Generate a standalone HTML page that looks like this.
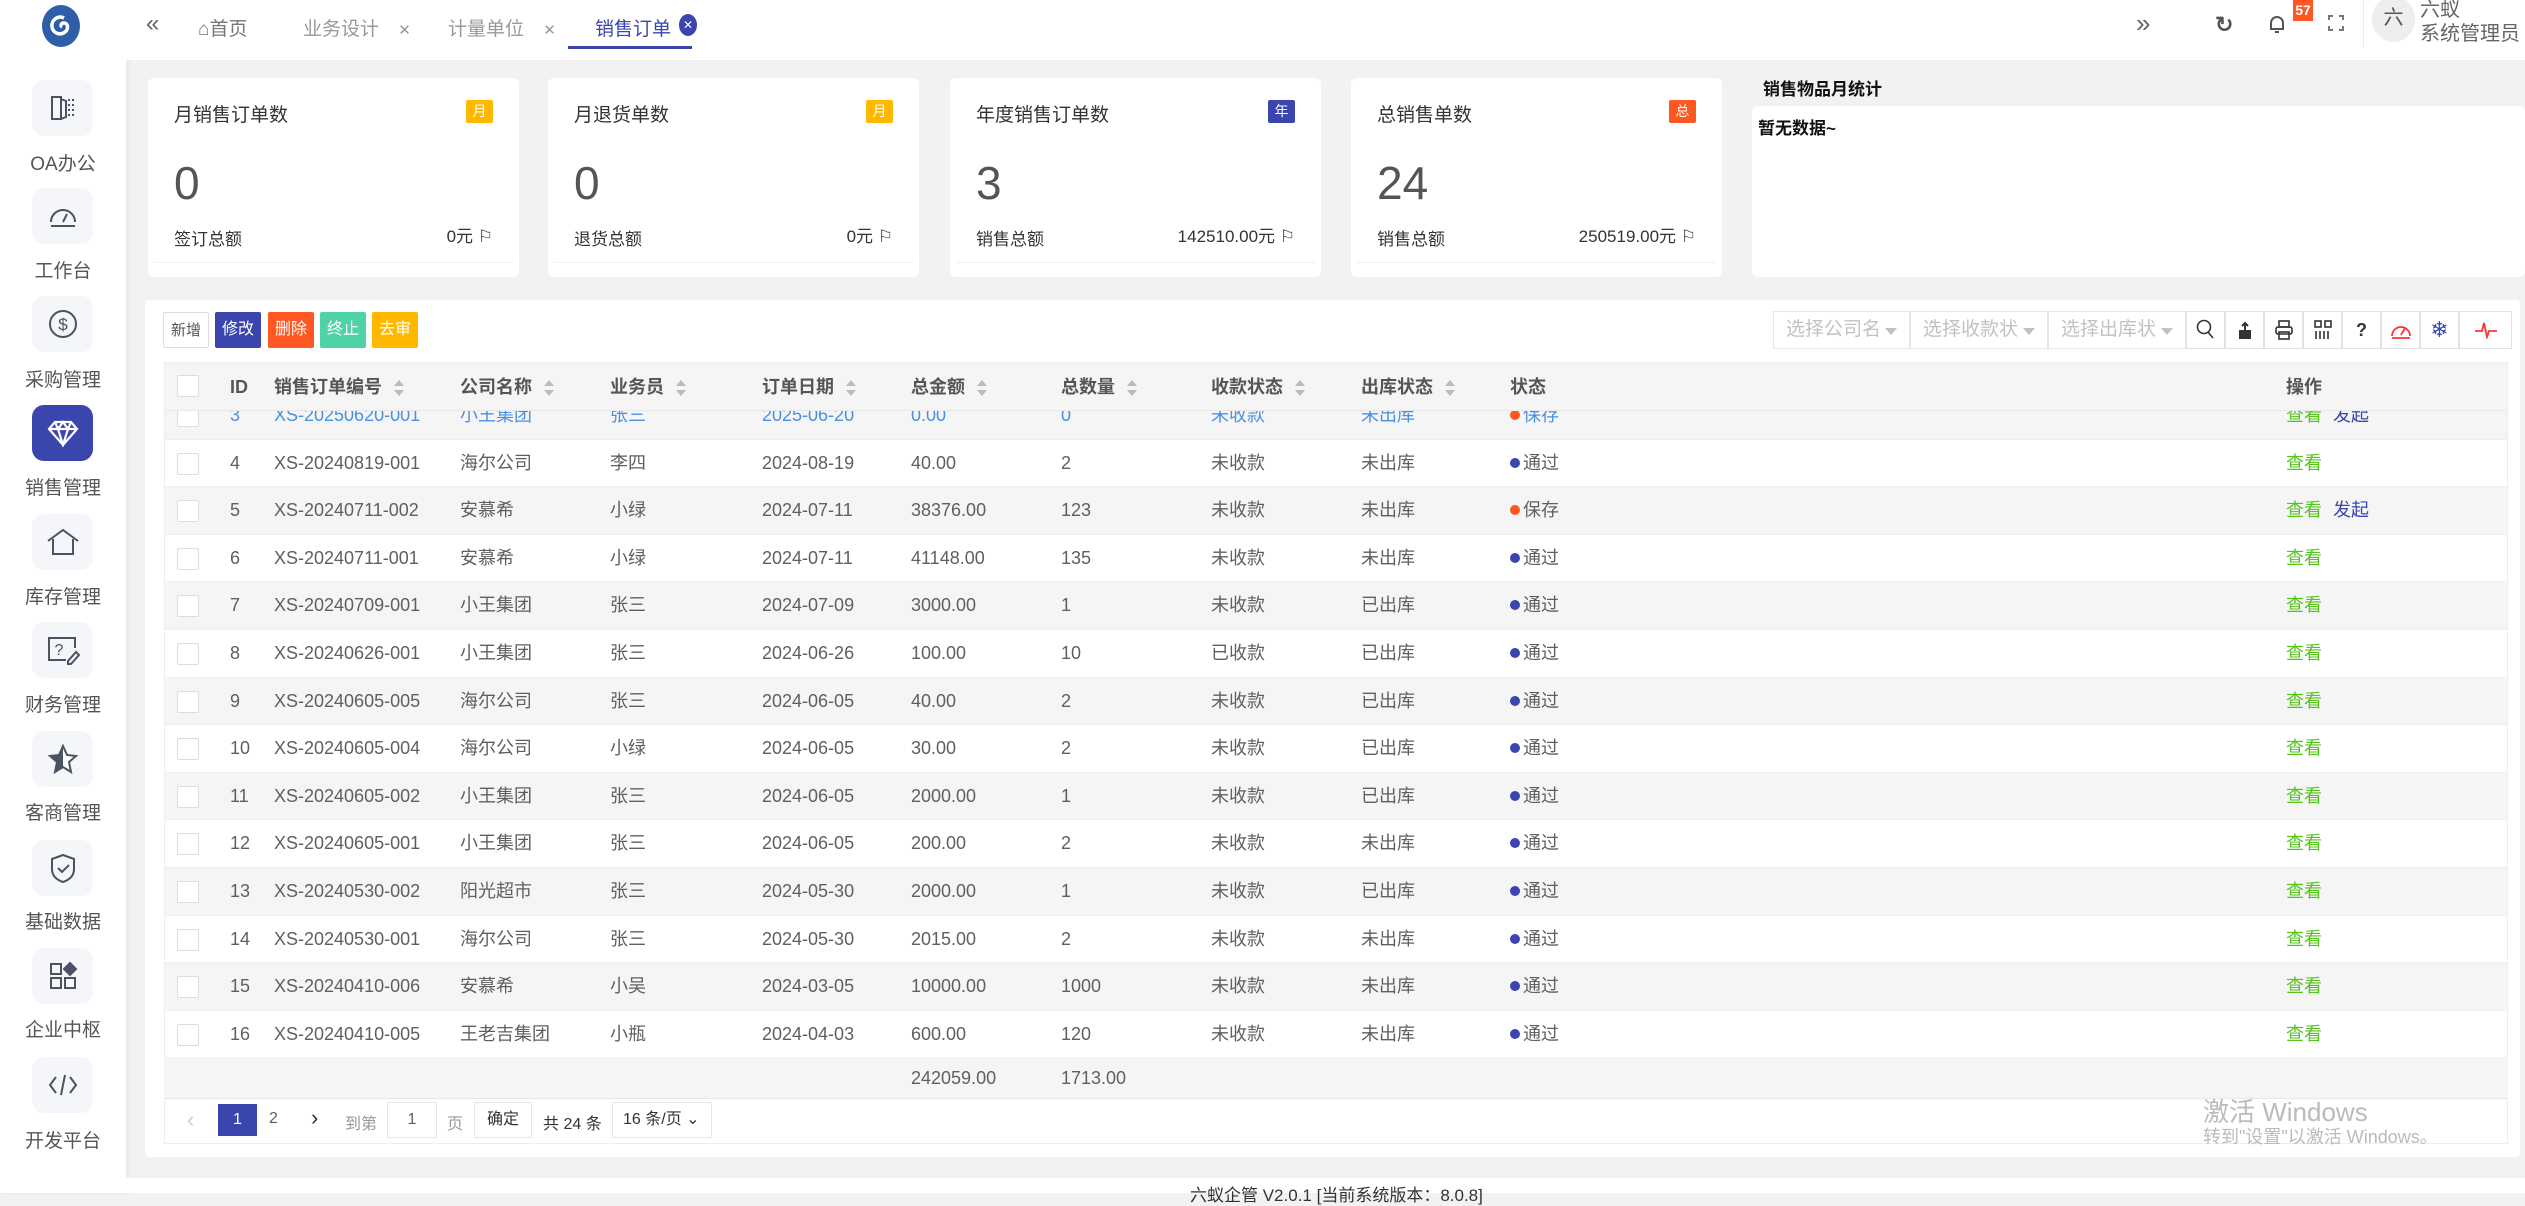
<!DOCTYPE html>
<html><head><meta charset="utf-8"><style>
*{margin:0;padding:0;box-sizing:border-box}
body{width:2525px;height:1193px;overflow:hidden;background:#f2f2f2;font-family:"Liberation Sans","Noto Sans CJK SC",sans-serif;color:#5f5f5f;position:relative}
.abs{position:absolute}
#side{left:0;top:0;width:126px;height:1193px;background:#fff;box-shadow:2px 0 6px rgba(0,0,0,.05)}
.sb{position:absolute;left:32px;width:61px;height:56px;border-radius:12px;background:#f4f6fa;display:flex;align-items:center;justify-content:center}
.sb.act{background:#3a46ad}
.sl{position:absolute;left:0;width:126px;text-align:center;font-size:19px;color:#555}
#top{left:126px;top:0;width:2399px;height:60px;background:#fff}
.tab{position:absolute;top:14px;font-size:19px;color:#999}
.card{position:absolute;top:78px;width:371px;height:199px;background:#fff;border-radius:6px}
.card .t{position:absolute;left:26px;top:22px;font-size:19px;color:#333}
.card .b{position:absolute;right:26px;top:22px;width:27px;height:23px;color:#fff;font-size:14px;text-align:center;line-height:23px;border-radius:2px}
.card .n{position:absolute;left:26px;top:78px;font-size:46px;color:#555}
.card .l{position:absolute;left:26px;top:147px;font-size:17px;color:#333}
.card .r{position:absolute;right:26px;top:144px;font-size:17px;color:#333}
.card .hr{position:absolute;left:6px;right:6px;bottom:14px;border-top:1px solid #f0f0f0}
#main{left:145px;top:300px;width:2375px;height:857px;background:#fff;border-radius:4px}
.btn{position:absolute;top:312px;height:36px;width:46px;font-size:16px;color:#fff;text-align:center;line-height:36px;border-radius:2px}
.row{position:absolute;left:164px;width:2344px;height:47.6px;font-size:18px;color:#5f5f5f}
.row span{position:absolute;top:0;line-height:47.6px;white-space:nowrap}
.row .cb{position:absolute;left:13px;top:13px;width:22px;height:22px;border:1px solid #ddd;background:#fff;border-radius:2px}
.hd{font-weight:bold;color:#555}
.dot{display:inline-block;width:10px;height:10px;border-radius:50%;margin-right:3px;vertical-align:1px}
.sort{display:inline-block;margin-left:12px;vertical-align:middle;width:10px;height:16px;position:relative}
.sort:before{content:"";position:absolute;top:0;left:0;border:5px solid transparent;border-bottom:6px solid #bbb;border-top:0}
.sort:after{content:"";position:absolute;bottom:0;left:0;border:5px solid transparent;border-top:6px solid #bbb;border-bottom:0}
.ic{position:absolute;top:311px;width:39px;height:38px;border:1px solid #e2e2e2;background:#fff;display:flex;align-items:center;justify-content:center;font-size:18px}
.sel{position:absolute;top:311px;height:38px;border:1px solid #e6e6e6;font-size:19px;color:#c2c2c2;line-height:36px;padding-left:12px}
.sel:after{content:"";position:absolute;right:12px;top:16px;border:6px solid transparent;border-top:7px solid #c2c2c2}
</style></head><body>

<div id="side" class="abs">
  <svg class="abs" style="left:37px;top:4px" width="50" height="44" viewBox="0 0 50 44"><ellipse cx="24" cy="22" rx="19" ry="21" fill="#2f5ea8"/><path d="M27 14c-6-3-13 2-12 9 1 6 8 9 13 5 4-3 3-9-1-9-3 0-4 3-2 4" stroke="#fff" stroke-width="3.5" fill="none"/></svg>
  <div class="sb" style="top:80px"><svg width="30" height="30" viewBox="0 0 30 30" fill="none" stroke="#4a5263" stroke-width="2"><path d="M4 4h9v22H4zM13 6l5 2v16l-5 2"/><path d="M21 6v2M21 11v2M21 16v2M21 21v2M25 6v2M25 11v2M25 16v2M25 21v2"/></svg></div>
  <div class="sl" style="top:149px">OA办公</div>
  <div class="sb" style="top:188px"><svg width="32" height="32" viewBox="0 0 32 32" fill="none" stroke="#4a5263" stroke-width="2"><path d="M4 22a12 12 0 1 1 24 0"/><path d="M4 26h24M16 22l4-8"/></svg></div>
  <div class="sl" style="top:256px">工作台</div>
  <div class="sb" style="top:296px"><svg width="32" height="32" viewBox="0 0 32 32" fill="none" stroke="#4a5263" stroke-width="2"><circle cx="16" cy="16" r="13"/><text x="16" y="22" font-size="17" text-anchor="middle" fill="#4a5263" stroke="none" font-family="Liberation Sans">$</text></svg></div>
  <div class="sl" style="top:365px">采购管理</div>
  <div class="sb act" style="top:405px"><svg width="32" height="28" viewBox="0 0 32 28" fill="none" stroke="#fff" stroke-width="2.2"><path d="M8 3h16l6 7-14 16L2 10zM2 10h28M11 10l5 16 5-16M8 3l3 7 5-7 5 7 3-7"/></svg></div>
  <div class="sl" style="top:473px">销售管理</div>
  <div class="sb" style="top:514px"><svg width="34" height="30" viewBox="0 0 34 30" fill="none" stroke="#4a5263" stroke-width="2"><path d="M2 14L17 3l15 11M7 12v15h20V12"/></svg></div>
  <div class="sl" style="top:582px">库存管理</div>
  <div class="sb" style="top:622px"><svg width="34" height="32" viewBox="0 0 34 32" fill="none" stroke="#4a5263" stroke-width="2"><path d="M20 26H3V4h26v10"/><text x="13" y="21" font-size="16" fill="#4a5263" stroke="none" text-anchor="middle" font-family="Liberation Sans">?</text><path d="M22 27l8-9 3 3-8 9h-3z"/></svg></div>
  <div class="sl" style="top:690px">财务管理</div>
  <div class="sb" style="top:731px"><svg width="32" height="32" viewBox="0 0 32 32"><path d="M16 3l4 9 9 1-7 6 2 10-8-5-8 5 2-10-7-6 9-1z" fill="#fff" stroke="#4a5263" stroke-width="2"/><path d="M16 3l-4 9-9 1 7 6-2 10 8-5z" fill="#4a5263"/></svg></div>
  <div class="sl" style="top:798px">客商管理</div>
  <div class="sb" style="top:840px"><svg width="30" height="32" viewBox="0 0 30 32" fill="none" stroke="#4a5263" stroke-width="2"><path d="M15 3l11 4v10c0 7-5 11-11 13C9 28 4 24 4 17V7z"/><path d="M10 16l4 4 7-7"/></svg></div>
  <div class="sl" style="top:907px">基础数据</div>
  <div class="sb" style="top:948px"><svg width="30" height="30" viewBox="0 0 30 30" fill="none" stroke="#4a5263" stroke-width="2"><rect x="3" y="3" width="10" height="10"/><rect x="3" y="17" width="10" height="10"/><rect x="17" y="17" width="10" height="10"/><path d="M22 2l6 6-6 6-6-6z" fill="#4a5263"/></svg></div>
  <div class="sl" style="top:1015px">企业中枢</div>
  <div class="sb" style="top:1057px"><svg width="30" height="26" viewBox="0 0 30 26" fill="none" stroke="#4a5263" stroke-width="2"><path d="M8 5L2 13l6 8M22 5l6 8-6 8M17 3l-4 20"/></svg></div>
  <div class="sl" style="top:1126px">开发平台</div>
</div>

<div id="top" class="abs">
  <div class="tab" style="left:20px;color:#666;font-size:24px;top:10px">«</div>
  <div class="tab" style="left:72px;color:#777">⌂首页</div>
  <div class="tab" style="left:177px">业务设计 <span style="margin-left:14px;font-size:15px">✕</span></div>
  <div class="tab" style="left:322px">计量单位 <span style="margin-left:14px;font-size:15px">✕</span></div>
  <div class="tab" style="left:469px;color:#3a46ad">销售订单</div>
  <div class="abs" style="left:553px;top:14px;width:18px;height:22px;border-radius:50%;background:#3a46ad;color:#fff;font-size:12px;text-align:center;line-height:22px">✕</div>
  <div class="abs" style="left:442px;top:46px;width:124px;height:3px;background:#3a46ad"></div>
  <div class="abs" style="left:2010px;top:8px;font-size:26px;color:#666">»</div>
  <div class="abs" style="left:2089px;top:12px;font-size:22px;color:#555;font-weight:bold">↻</div>
  <svg class="abs" style="left:2142px;top:14px" width="18" height="20" viewBox="0 0 18 20" fill="none" stroke="#555" stroke-width="2"><path d="M3 15V9a6 6 0 0 1 12 0v6H2h14M7 18h4"/></svg>
  <div class="abs" style="left:2167px;top:0;width:20px;height:21px;background:#ff5722;color:#fff;font-size:14px;font-weight:bold;text-align:center;line-height:21px">57</div>
  <svg class="abs" style="left:2202px;top:15px" width="16" height="16" viewBox="0 0 16 16" fill="none" stroke="#777" stroke-width="2"><path d="M1 5V1h4M11 1h4v4M15 11v4h-4M5 15H1v-4"/></svg>
  <div class="abs" style="left:2237px;top:0;width:1px;height:48px;background:#eee"></div>
  <div class="abs" style="left:2246px;top:-4px;width:43px;height:46px;border-radius:50%;background:#eee;color:#555;font-size:20px;text-align:center;line-height:44px">六</div>
  <div class="abs" style="left:2294px;top:-2px;font-size:20px;color:#666;line-height:24px">六蚁<br>系统管理员</div>
</div>
<div class="abs" style="left:126px;top:60px;width:2399px;height:1px;background:#eee"></div>

<div class="card" style="left:148px"><div class="t">月销售订单数</div><div class="b" style="background:#ffb800">月</div><div class="n">0</div><div class="l">签订总额</div><div class="r">0元 ⚐</div><div class="hr"></div></div>
<div class="card" style="left:548px"><div class="t">月退货单数</div><div class="b" style="background:#ffb800">月</div><div class="n">0</div><div class="l">退货总额</div><div class="r">0元 ⚐</div><div class="hr"></div></div>
<div class="card" style="left:950px"><div class="t">年度销售订单数</div><div class="b" style="background:#3a46ad">年</div><div class="n">3</div><div class="l">销售总额</div><div class="r">142510.00元 ⚐</div><div class="hr"></div></div>
<div class="card" style="left:1351px"><div class="t">总销售单数</div><div class="b" style="background:#ff5722">总</div><div class="n">24</div><div class="l">销售总额</div><div class="r">250519.00元 ⚐</div><div class="hr"></div></div>
<div class="abs" style="left:1763px;top:75px;font-size:17px;font-weight:bold;color:#111">销售物品月统计</div>
<div class="abs" style="left:1752px;top:106px;width:773px;height:171px;background:#fff;border-radius:6px"><div style="position:absolute;left:6px;top:8px;font-size:17px;font-weight:bold;color:#111">暂无数据~</div></div>

<div id="main" class="abs"></div>
<div class="btn" style="left:163px;background:#fff;border:1px solid #ddd;color:#555;font-size:15px">新增</div>
<div class="btn" style="left:215px;background:#3a46ad">修改</div>
<div class="btn" style="left:268px;background:#ff5722">删除</div>
<div class="btn" style="left:320px;background:#4fd3a5">终止</div>
<div class="btn" style="left:372px;background:#ffb800">去审</div>

<div class="sel" style="left:1773px;width:137px">选择公司名</div>
<div class="sel" style="left:1910px;width:138px">选择收款状</div>
<div class="sel" style="left:2048px;width:138px">选择出库状</div>
<div class="ic" style="left:2186px"><svg width="20" height="22" viewBox="0 0 20 22" fill="none" stroke="#333" stroke-width="1.6"><circle cx="8" cy="8" r="6.5"/><path d="M12 13l5 6"/></svg></div>
<div class="ic" style="left:2225px"><svg width="18" height="20" viewBox="0 0 18 20"><rect x="3" y="10" width="12" height="9" fill="#333"/><path d="M9 11V3M6 6l3-3 3 3" stroke="#333" stroke-width="2" fill="none"/></svg></div>
<div class="ic" style="left:2264px"><svg width="20" height="20" viewBox="0 0 20 20" fill="none" stroke="#333" stroke-width="1.6"><rect x="5" y="1" width="10" height="6"/><rect x="2" y="7" width="16" height="7" rx="2"/><rect x="5" y="12" width="10" height="7"/></svg></div>
<div class="ic" style="left:2303px"><svg width="18" height="20" viewBox="0 0 18 20" fill="none" stroke="#333" stroke-width="1.6"><rect x="1" y="1" width="6" height="6"/><rect x="11" y="1" width="6" height="6"/><path d="M2 11v8M6 11v8M10 11v8M14 11v8"/></svg></div>
<div class="ic" style="left:2342px;font-weight:bold;color:#333">?</div>
<div class="ic" style="left:2381px"><svg width="22" height="20" viewBox="0 0 22 20" fill="none" stroke="#f33" stroke-width="1.8"><path d="M2 16a9 9 0 1 1 18 0"/><path d="M2 18h18M11 15l4-7"/></svg></div>
<div class="ic" style="left:2420px;color:#3a46ad;font-size:22px">❄</div>
<div class="ic" style="left:2459px;width:53px"><svg width="22" height="18" viewBox="0 0 22 18" fill="none" stroke="#f33" stroke-width="1.8"><path d="M0 10h7l2-8 3 14 2-6h8"/></svg></div>

<div class="abs" style="left:164px;top:362px;width:2344px;height:697px;border:1px solid #eee;overflow:hidden">
<div style="position:absolute;left:-1px;top:47px;width:2344px;height:650px;overflow:hidden">
<div id="rows" style="position:absolute;left:-164px;top:-410px;width:2525px;height:1200px">
</div></div>
<div style="position:absolute;left:-1px;top:0;width:2344px;height:48px;background:#f5f5f5;border-bottom:1px solid #e8e8e8">
<div class="row hd" style="left:0;top:0;height:48px"><div class="cb" style="top:12px"></div><span style="left:66px;line-height:48px">ID</span><span style="left:110px;line-height:48px">销售订单编号<i class="sort"></i></span><span style="left:296px;line-height:48px">公司名称<i class="sort"></i></span><span style="left:446px;line-height:48px">业务员<i class="sort"></i></span><span style="left:598px;line-height:48px">订单日期<i class="sort"></i></span><span style="left:747px;line-height:48px">总金额<i class="sort"></i></span><span style="left:897px;line-height:48px">总数量<i class="sort"></i></span><span style="left:1047px;line-height:48px">收款状态<i class="sort"></i></span><span style="left:1197px;line-height:48px">出库状态<i class="sort"></i></span><span style="left:1346px;line-height:48px">状态</span><span style="left:2122px;line-height:48px">操作</span></div>
</div>
</div>
<div class="abs" style="left:164px;top:1057px;width:2344px;height:42px;background:#f5f5f5;border-bottom:1px solid #e8e8e8;font-size:18px;line-height:42px"><span class="abs" style="left:747px">242059.00</span><span class="abs" style="left:897px">1713.00</span></div>
<div class="abs" style="left:164px;top:1099px;width:2344px;height:45px;border:1px solid #eee;border-top:0;font-size:16px">
  <span class="abs" style="left:22px;top:8px;color:#ccc;font-size:22px">‹</span>
  <span class="abs" style="left:53px;top:5px;width:39px;height:32px;background:#3a46ad;color:#fff;text-align:center;line-height:32px">1</span>
  <span class="abs" style="left:104px;top:11px">2</span>
  <span class="abs" style="left:146px;top:6px;font-size:22px;color:#333">›</span>
  <span class="abs" style="left:180px;top:11px;color:#999">到第</span>
  <span class="abs" style="left:222px;top:3px;width:50px;height:36px;border:1px solid #e6e6e6;text-align:center;line-height:34px">1</span>
  <span class="abs" style="left:282px;top:11px;color:#999">页</span>
  <span class="abs" style="left:309px;top:3px;width:58px;height:36px;border:1px solid #e6e6e6;text-align:center;line-height:34px;color:#333">确定</span>
  <span class="abs" style="left:378px;top:11px;color:#333">共 24 条</span>
  <span class="abs" style="left:447px;top:3px;width:100px;height:36px;border:1px solid #e6e6e6;line-height:34px;padding-left:10px;color:#333">16 条/页 ⌄</span>
</div>
<div class="abs" style="left:2203px;top:1092px;font-size:26px;color:#bbb">激活 Windows</div>
<div class="abs" style="left:2203px;top:1123px;font-size:18px;color:#bbb">转到"设置"以激活 Windows。</div>
<div class="abs" style="left:126px;top:1178px;width:2399px;height:15px;background:#fff"></div>
<div class="abs" style="left:1190px;top:1181px;font-size:17px;color:#333">六蚁企管 V2.0.1 [当前系统版本：8.0.8]</div>

<script>
var d=[
[3,"XS-20250620-001","小王集团","张三","2025-06-20","0.00","0","未收款","未出库",0,1],
[4,"XS-20240819-001","海尔公司","李四","2024-08-19","40.00","2","未收款","未出库",1,0],
[5,"XS-20240711-002","安慕希","小绿","2024-07-11","38376.00","123","未收款","未出库",0,1],
[6,"XS-20240711-001","安慕希","小绿","2024-07-11","41148.00","135","未收款","未出库",1,0],
[7,"XS-20240709-001","小王集团","张三","2024-07-09","3000.00","1","未收款","已出库",1,0],
[8,"XS-20240626-001","小王集团","张三","2024-06-26","100.00","10","已收款","已出库",1,0],
[9,"XS-20240605-005","海尔公司","张三","2024-06-05","40.00","2","未收款","已出库",1,0],
[10,"XS-20240605-004","海尔公司","小绿","2024-06-05","30.00","2","未收款","已出库",1,0],
[11,"XS-20240605-002","小王集团","张三","2024-06-05","2000.00","1","未收款","已出库",1,0],
[12,"XS-20240605-001","小王集团","张三","2024-06-05","200.00","2","未收款","未出库",1,0],
[13,"XS-20240530-002","阳光超市","张三","2024-05-30","2000.00","1","未收款","已出库",1,0],
[14,"XS-20240530-001","海尔公司","张三","2024-05-30","2015.00","2","未收款","未出库",1,0],
[15,"XS-20240410-006","安慕希","小吴","2024-03-05","10000.00","1000","未收款","未出库",1,0],
[16,"XS-20240410-005","王老吉集团","小瓶","2024-04-03","600.00","120","未收款","未出库",1,0]];
var h="",L=[66,110,296,446,598,747,897,1047,1197];
d.forEach(function(r,i){var top=392+i*47.6;var c=i==0?"color:#4a90e2;":"";
h+='<div class="row" style="top:'+top+'px;background:'+(i%2==0?'#f5f5f5':'#fff')+';border-bottom:1px solid #eee;'+c+'"><div class="cb"></div>';
for(var k=0;k<9;k++)h+='<span style="left:'+L[k]+'px">'+r[k]+'</span>';
h+='<span style="left:1346px"><i class="dot" style="background:'+(r[9]?'#3a46ad':'#ff5722')+'"></i>'+(r[9]?'通过':'保存')+'</span>';
h+='<span style="left:2122px;color:#52c41a">查看'+(r[10]?' <b style="font-weight:normal;color:#3a46ad;margin-left:6px">发起</b>':'')+'</span></div>';});
document.getElementById('rows').innerHTML=h;
</script>
</body></html>
